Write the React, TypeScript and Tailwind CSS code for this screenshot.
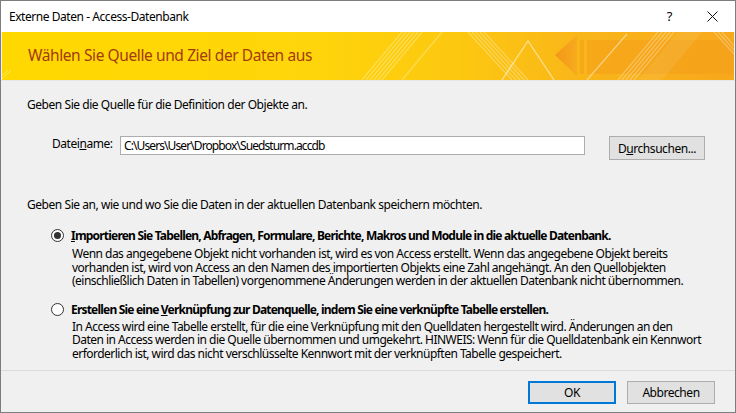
import React from "react";

const font = { fontFamily: "'Segoe UI', 'Noto Sans', 'Open Sans', sans-serif" };

function Banner() {
  return (
    <div className="relative shrink-0 h-[48px] mx-[1px] bg-[linear-gradient(90deg,#ffd800_0%,#fed60a_40%,#fcc810_62%,#f9b51a_80%,#f7a81c_100%)] overflow-hidden">
      <svg className="absolute inset-0" width="734" height="48" viewBox="0 0 734 48">
        <defs>
          <linearGradient id="arr" x1="0" x2="1" y1="0" y2="0">
            <stop offset="0" stopColor="#f39018" />
            <stop offset="1" stopColor="#f7a91e" />
          </linearGradient>
        </defs>
        <g stroke="#ffffff" strokeOpacity="0.35" strokeWidth="1">
          <line x1="0" y1="44" x2="6" y2="38" />
          <line x1="0" y1="47" x2="9" y2="38" />
        </g>
        <g stroke="#ffffff" strokeOpacity="0.3" strokeWidth="1.2">
          <line x1="360" y1="48" x2="400" y2="0" />
          <line x1="364" y1="48" x2="404" y2="0" />
          <line x1="368" y1="48" x2="408" y2="0" />
          <line x1="372" y1="48" x2="412" y2="0" />
          <line x1="376" y1="48" x2="416" y2="0" />
          <line x1="380" y1="48" x2="420" y2="0" />
          <line x1="400" y1="48" x2="440" y2="0" />
        </g>
        <g stroke="#ffffff" strokeOpacity="0.3" strokeWidth="1.2">
          <line x1="466" y1="0" x2="510" y2="48" />
          <line x1="470" y1="0" x2="514" y2="48" />
          <line x1="474" y1="0" x2="518" y2="48" />
          <line x1="478" y1="0" x2="522" y2="48" />
          <line x1="482" y1="0" x2="526" y2="48" />
        </g>
        <polyline points="500,48 526,9 552,48" fill="none" stroke="#ffffff" strokeOpacity="0.5" strokeWidth="1.3" />
        <polygon points="553,23 575,3 575,44" fill="url(#arr)" opacity="0.85" />
        <rect x="585" y="8" width="150" height="34" fill="#f49e1a" opacity="0.55" />
        <rect x="578" y="8" width="4" height="34" fill="#f49e1a" opacity="0.6" />
        <g stroke="#ffffff" strokeOpacity="0.45" strokeWidth="1.2">
          <line x1="585" y1="48" x2="625" y2="2" />
        </g>
        <g stroke="#ffffff" strokeOpacity="0.3" strokeWidth="1.2">
          <line x1="616" y1="48" x2="656" y2="0" />
          <line x1="620" y1="48" x2="660" y2="0" />
          <line x1="624" y1="48" x2="664" y2="0" />
          <line x1="628" y1="48" x2="668" y2="0" />
          <line x1="632" y1="48" x2="672" y2="0" />
        </g>
        <polygon points="636,48 676,0 700,0 660,48" fill="#ffffff" opacity="0.08" />
        <g stroke="#ffffff" strokeOpacity="0.3" strokeWidth="1.2">
          <line x1="712" y1="0" x2="734" y2="24" />
          <line x1="716" y1="0" x2="734" y2="20" />
          <line x1="720" y1="0" x2="734" y2="16" />
        </g>
      </svg>
      <div className="relative pl-[26px] h-full flex items-center text-[15.5px] text-[#a53a0e] tracking-[-0.4px] whitespace-nowrap">
        Wählen Sie Quelle und Ziel der Daten aus
      </div>
    </div>
  );
}

function Radio({ checked }: { checked: boolean }) {
  return (
    <span className="w-[13px] h-[13px] rounded-full border border-[#333] bg-white flex items-center justify-center shrink-0">
      {checked && <span className="w-[7px] h-[7px] rounded-full bg-[#333]" />}
    </span>
  );
}

export default function App() {
  return (
    <div
      className="w-[736px] h-[413px] border border-[#7d7d7d] bg-[#f0f0f0] flex flex-col text-[12px] text-black overflow-hidden tracking-[-0.45px] whitespace-nowrap"
      style={font}
    >
      <div className="shrink-0 h-[31px] bg-white flex items-center pl-[8px] pr-[16px]">
        <span className="flex-1">Externe Daten - Access-Datenbank</span>
        <span className="text-[13px] mr-[35px]">?</span>
        <svg width="11" height="11" viewBox="0 0 11 11" className="mr-[1px]">
          <path d="M0.5 0.5 L10.5 10.5 M10.5 0.5 L0.5 10.5" stroke="#111" strokeWidth="1" />
        </svg>
      </div>
      <Banner />
      <div className="shrink-0 h-[1px] bg-[#e6e6e6]" />
      <div className="flex-1 flex flex-col pl-[26px] leading-[15px]">
        <div className="mt-[16px]">Geben Sie die Quelle für die Definition der Objekte an.</div>
        <div className="mt-[24px] h-[24px] flex items-start">
          <span className="ml-[25px] mt-[0px] w-[68px]">
            Datei<span className="underline">n</span>ame:
          </span>
          <div className="h-[19px] w-[465px] bg-white border border-[#adadad] flex items-center pl-[3px] tracking-[-0.9px]">
            C:\Users\User\Dropbox\Suedsturm.accdb
          </div>
          <button className="ml-[24px] h-[24px] w-[96px] bg-[#e1e1e1] border border-[#adadad] flex items-center justify-center">
            D<span className="underline">u</span>rchsuchen...
          </button>
        </div>
        <div className="mt-[37px]">Geben Sie an, wie und wo Sie die Daten in der aktuellen Datenbank speichern möchten.</div>
        <div className="mt-[16px] ml-[24px] flex items-center gap-[7px]">
          <Radio checked={true} />
          <span className="font-bold tracking-[-0.8px]">
            <span className="underline">I</span>mportieren Sie Tabellen, Abfragen, Formulare, Berichte, Makros und Module in die aktuelle Datenbank.
          </span>
        </div>
        <div className="mt-[4px] ml-[45px] leading-[13.5px] tracking-[-0.52px]">
          Wenn das angegebene Objekt nicht vorhanden ist, wird es von Access erstellt. Wenn das angegebene Objekt bereits<br />
          vorhanden ist, wird von Access an den Namen des importierten Objekts eine Zahl angehängt. An den Quellobjekten<br />
          (einschließlich Daten in Tabellen) vorgenommene Änderungen werden in der aktuellen Datenbank nicht übernommen.
        </div>
        <div className="mt-[14px] ml-[24px] flex items-center gap-[7px]">
          <Radio checked={false} />
          <span className="font-bold tracking-[-0.8px]">
            Erstellen Sie eine <span className="underline">V</span>erknüpfung zur Datenquelle, indem Sie eine verknüpfte Tabelle erstellen.
          </span>
        </div>
        <div className="mt-[3px] ml-[45px] leading-[13.5px] tracking-[-0.52px]">
          In Access wird eine Tabelle erstellt, für die eine Verknüpfung mit den Quelldaten hergestellt wird. Änderungen an den<br />
          Daten in Access werden in die Quelle übernommen und umgekehrt. HINWEIS: Wenn für die Quelldatenbank ein Kennwort<br />
          erforderlich ist, wird das nicht verschlüsselte Kennwort mit der verknüpften Tabelle gespeichert.
        </div>
      </div>
      <div className="shrink-0 h-[42px] border-t border-[#dadada] flex items-start justify-end pt-[10px] pr-[20px] gap-[11px]">
        <button className="w-[88px] h-[23px] bg-[#e1e1e1] border-2 border-[#0078d7] flex items-center justify-center">OK</button>
        <button className="w-[88px] h-[23px] bg-[#e1e1e1] border border-[#adadad] flex items-center justify-center">Abbrechen</button>
      </div>
    </div>
  );
}
